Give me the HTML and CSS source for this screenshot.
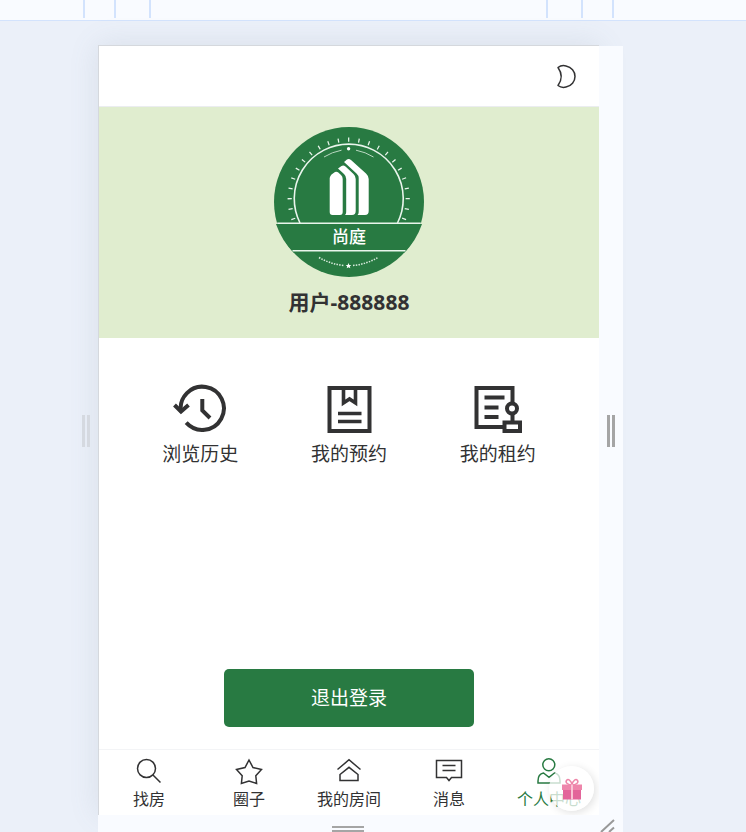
FILE: index.html
```html
<!DOCTYPE html>
<html lang="zh-CN">
<head>
<meta charset="utf-8">
<meta name="viewport" content="width=device-width, initial-scale=1">
<title>个人中心</title>
<link rel="stylesheet" href="styles.css">
</head>
<body>
<div class="ruler" aria-hidden="true">
  <i class="mark"></i><i class="mark"></i><i class="mark wide"></i>
  <i class="mark"></i><i class="mark inner"></i><i class="mark"></i>
</div>
<div class="stage">
  <div class="handle faded"><i></i><i></i></div>
  <main class="phone">
    <header class="topbar">
      <button class="icon-button" type="button" aria-label="切换主题">
        <svg width="24" height="26" viewBox="0 0 24 26" fill="none" stroke="#323233" stroke-width="1.5" stroke-linejoin="round"><path d="M5 4.500C7 2.900 10 2.200 13 2.900C18.500 4.200 22 8.500 22 13.500C22 18.500 18.500 22.800 13 24.100C10 24.800 7 24.100 5 22.500C9.300 16.500 9.300 10.500 5 4.500Z"/></svg>
      </button>
    </header>

    <section class="profile">
      <svg class="avatar" viewBox="0 0 150 150" role="img" aria-label="尚庭">
        <circle cx="75" cy="75" r="75" fill="#287a42"/>
        <g fill="none" stroke="#e9f5ec">
          <path d="M26 96A54.500 54.500 0 1 1 123.500 96" stroke-width="1.600"/>
          <circle cx="74.700" cy="71.700" r="59" stroke-width="4.200" pathLength="360" stroke-dasharray="1.200 8.800" transform="rotate(159.400 74.700 71.700)"/>
        </g>
        <path d="M2 97H148A76 76 0 0 1 130 126H20A76 76 0 0 1 2 97Z" fill="#287a42"/>
        <path d="M22 124.500H128A75 75 0 0 1 22 124.500Z" fill="#287a42"/>
        <path d="M3.200 96.200H146.800M18.500 123.800H131.500" stroke="#e9f5ec" stroke-width="1.500"/>
        <path d="M50 30Q58 25 67.500 23.200M82 23.200Q91.500 25 99.500 30" stroke="#b9d8c1" stroke-width="1" fill="none"/>
        <circle cx="74.600" cy="21.800" r="1.700" fill="#fff"/>
        <g fill="#fff">
          <path d="M55.700 51Q56 49 57.500 47.500L61 45Q62.500 44.300 64 45.200L67 48Q68.700 49.500 68.700 52V85Q68.700 88 66 88H58.500Q55.700 88 55.700 85Z"/>
          <path d="M64 41.500L67.500 39Q69.500 38 71.500 39.500L79.500 47Q81.700 49 81.700 52V84Q81.700 88 78 88H71C72 87 72.200 86 72.200 84V52Q72.200 49 70 47Z"/>
          <path d="M70 35L73 32.500Q75 31.500 77 33L92 46.500Q94.700 49 94.700 52V84Q94.700 88 91 88H83.500C84.500 87 84.700 86 84.700 84V51Q84.700 48.500 82.500 46.500Z"/>
        </g>
        <text class="avatar-text" x="75" y="115.500" text-anchor="middle">尚庭</text>
        <path d="M45 130.500Q56 137 70 138.500M79 138.500Q93 137 104 130.500" fill="none" stroke="#d8eadc" stroke-width="1.500" stroke-dasharray="1.500 1.200"/>
        <path d="M74.500 136L75.300 137.900L77.300 138L75.800 139.300L76.300 141.300L74.500 140.200L72.700 141.300L73.200 139.300L71.700 138L73.700 137.900Z" fill="#fff"/>
      </svg>
      <h1 class="username">用户-888888</h1>
    </section>

    <nav class="menu" aria-label="我的服务">
      <a class="menu-item" href="#history">
        <svg width="56" height="56" viewBox="0 0 56 56" fill="none" stroke="#323233" stroke-width="4"><path d="M9 31A21.600 21.600 0 1 1 14.200 41.700"/><path d="M2.500 24L9 30.500L16.500 24M30.300 18V29.500L38 37"/></svg>
        <span>浏览历史</span>
      </a>
      <a class="menu-item" href="#appointment">
        <svg width="56" height="56" viewBox="0 0 56 56" fill="none" stroke="#323233" stroke-width="4"><path d="M8.500 7H48.500V50H8.500Z"/><path d="M22.500 7V22L28.500 18L34.500 22V7M17 32.500H40.500M17 40.500H40.500" stroke-width="3.600"/></svg>
        <span>我的预约</span>
      </a>
      <a class="menu-item" href="#lease">
        <svg width="56" height="56" viewBox="0 0 56 56" fill="none" stroke="#323233" stroke-width="4"><path d="M42.500 23V7H6.500V46H34"/><path d="M14.500 16.500H34.500M14.500 26.500H28.500M14.500 36H28.500M42.500 33V41M34.500 41.500H50V50H34.500Z"/><circle cx="42" cy="27.500" r="5"/></svg>
        <span>我的租约</span>
      </a>
    </nav>

    <button class="logout" type="button">退出登录</button>

    <nav class="tabbar" aria-label="主导航">
      <a class="tab" href="#search">
        <svg width="28" height="28" viewBox="0 0 28 28"><circle cx="11.500" cy="11.500" r="9"/><path d="M18 18L25.500 25.500"/></svg>
        <span>找房</span>
      </a>
      <a class="tab" href="#circle">
        <svg width="28" height="28" viewBox="0 0 28 28"><path d="M14 3L18 10.500L26.500 12.500L20.800 18.800L21.600 26.500L14 24L6.400 26.500L7.200 18.800L1.500 12.500L10 10.500Z"/></svg>
        <span>圈子</span>
      </a>
      <a class="tab" href="#room">
        <svg width="28" height="28" viewBox="0 0 28 28"><path d="M2.500 12.500L14 2.800L25.500 12.500M5 23.500V17.500L14 10.300L23 17.500V23.500Z"/></svg>
        <span>我的房间</span>
      </a>
      <a class="tab" href="#message">
        <svg width="28" height="28" viewBox="0 0 28 28"><path d="M1.500 3.500H26.500V20.500H16.500L14 23.500L11.500 20.500H1.500ZM7.500 8.500H20.500M7.500 13.500H20.500"/></svg>
        <span>消息</span>
      </a>
      <a class="tab active" href="#me" aria-current="page">
        <svg width="28" height="28" viewBox="0 0 28 28"><circle cx="13.800" cy="7.700" r="6"/><path d="M8.500 16C5 16.500 3 19.500 3 24V26H25V24C25 19.500 23 16.500 19.500 16L14 20.300Z"/></svg>
        <span>个人中心</span>
      </a>
    </nav>
    <button class="gift" type="button" aria-label="礼物">
      <svg width="24" height="24" viewBox="0 0 24 24"><path d="M12 8C8 8 5 5.500 6.500 3.500S11 3 12 7.500C13 3 16 1.500 17.500 3.500S16 8 12 8Z" fill="none" stroke="#ee86a9" stroke-width="1.500"/><path d="M2 7.500H22V13H2Z" fill="#ee86ab"/><path d="M3 13H21V22.500H3Z" fill="#e3659a"/><path d="M11 7.500H13V22.500H11Z" fill="#f9c4d5"/></svg>
    </button>
  </main>
  <div class="handle right"><i></i><i></i></div>
  <div class="handle bottom">
    <div class="grip"><i></i><i></i></div>
    <svg width="16" height="14" viewBox="0 0 16 14" stroke="#999" stroke-width="2"><path d="M2 14L15 2M10 14L15 9.500"/></svg>
  </div>
</div>
</body>
</html>
```
FILE: styles.css
```css
* {
  box-sizing: border-box;
}

body {
  display: flex;
  flex-direction: column;
  min-height: 100vh;
  margin: 0;
  background: #ebf0f9;
  color: #323233;
  font-family: "Noto Sans CJK SC", sans-serif;
}

a {
  color: inherit;
  text-decoration: none;
}

button {
  padding: 0;
  border: 0;
  color: inherit;
  font: inherit;
}

svg {
  display: block;
}

.ruler {
  display: flex;
  gap: 29px;
  height: 21px;
  padding: 0 132px 0 83px;
  border-bottom: 1px solid #d3e3fd;
  background: #f9fbff;
}

.mark {
  width: 2px;
  height: 18px;
  background: #d3e3fd;
}

.mark.wide {
  margin-right: auto;
  margin-left: 4px;
}

.mark.inner {
  margin-left: 4px;
}

.stage {
  display: grid;
  flex: 1;
  grid-template-columns: 24px minmax(0, 1fr) 24px;
  grid-template-rows: 1fr 17px;
  padding: 24px 123px 0 74px;
}

.handle {
  z-index: 1;
  display: flex;
  align-items: center;
  justify-content: center;
  gap: 2px;
  margin-top: 1px;
  background: #f9fbff;
}

.handle i {
  width: 3px;
  height: 32px;
  background: #a5a5a5;
}

.handle.faded {
  background: none;
}

.handle.faded i {
  background: #d5d9e0;
}

.handle.bottom {
  display: grid;
  grid-column: 2 / 4;
  grid-template-columns: 1fr 24px;
  align-items: end;
  margin-top: 0;
}

.grip {
  display: grid;
  justify-content: center;
  gap: 2px;
}

.handle .grip i {
  width: 32px;
  height: 2px;
}

.phone {
  position: relative;
  display: flex;
  flex-direction: column;
  border-top: 1px solid #d5d8dd;
  border-left: 1px solid #d5d8dd;
  background: #fff;
  box-shadow: 0 0 28px rgba(100, 120, 135, 0.14);
}

.topbar {
  display: flex;
  align-items: center;
  justify-content: flex-end;
  height: 61px;
  padding-right: 22px;
  border-bottom: 1px solid #ebedf0;
}

.icon-button {
  background: none;
}

.profile {
  display: flex;
  flex-direction: column;
  align-items: center;
  gap: 10px;
  padding: 20px 20px 21px;
  background: #e0edcf;
}

.avatar {
  width: 150px;
  height: 150px;
}

.avatar-text {
  fill: #fff;
  font-size: 17px;
  font-weight: 500;
}

.username {
  margin: 0;
  font: bold 21px/30px "Open Sans", "Noto Sans CJK SC", sans-serif;
}

.menu {
  display: grid;
  grid-template-columns: repeat(3, 1fr);
  padding: 43px 27px 0;
}

.menu-item {
  display: flex;
  flex-direction: column;
  align-items: center;
  gap: 2px;
  font-size: 19px;
  line-height: 28px;
}

.logout {
  align-self: center;
  width: 50%;
  height: 58px;
  margin: auto 0 22px;
  padding-bottom: 4px;
  border-radius: 5px;
  background: #287a42;
  color: #fff;
  font-size: 19px;
}

.tabbar {
  display: grid;
  grid-template-columns: repeat(5, 1fr);
  height: 66px;
  padding-top: 7px;
  border-top: 1px solid #f3f4f6;
}

.tab {
  display: flex;
  flex-direction: column;
  align-items: center;
  gap: 1px;
  font-size: 16px;
  line-height: 24px;
}

.tab svg {
  fill: none;
  stroke: currentColor;
  stroke-width: 1.5px;
}

.tab.active {
  color: #287a42;
}

.gift {
  position: absolute;
  right: 5px;
  bottom: 4px;
  display: grid;
  place-items: center;
  width: 45px;
  height: 45px;
  border-radius: 50%;
  background: rgba(255, 255, 255, 0.75);
  box-shadow: 2px 2px 8px rgba(0, 0, 0, 0.12);
}
```
